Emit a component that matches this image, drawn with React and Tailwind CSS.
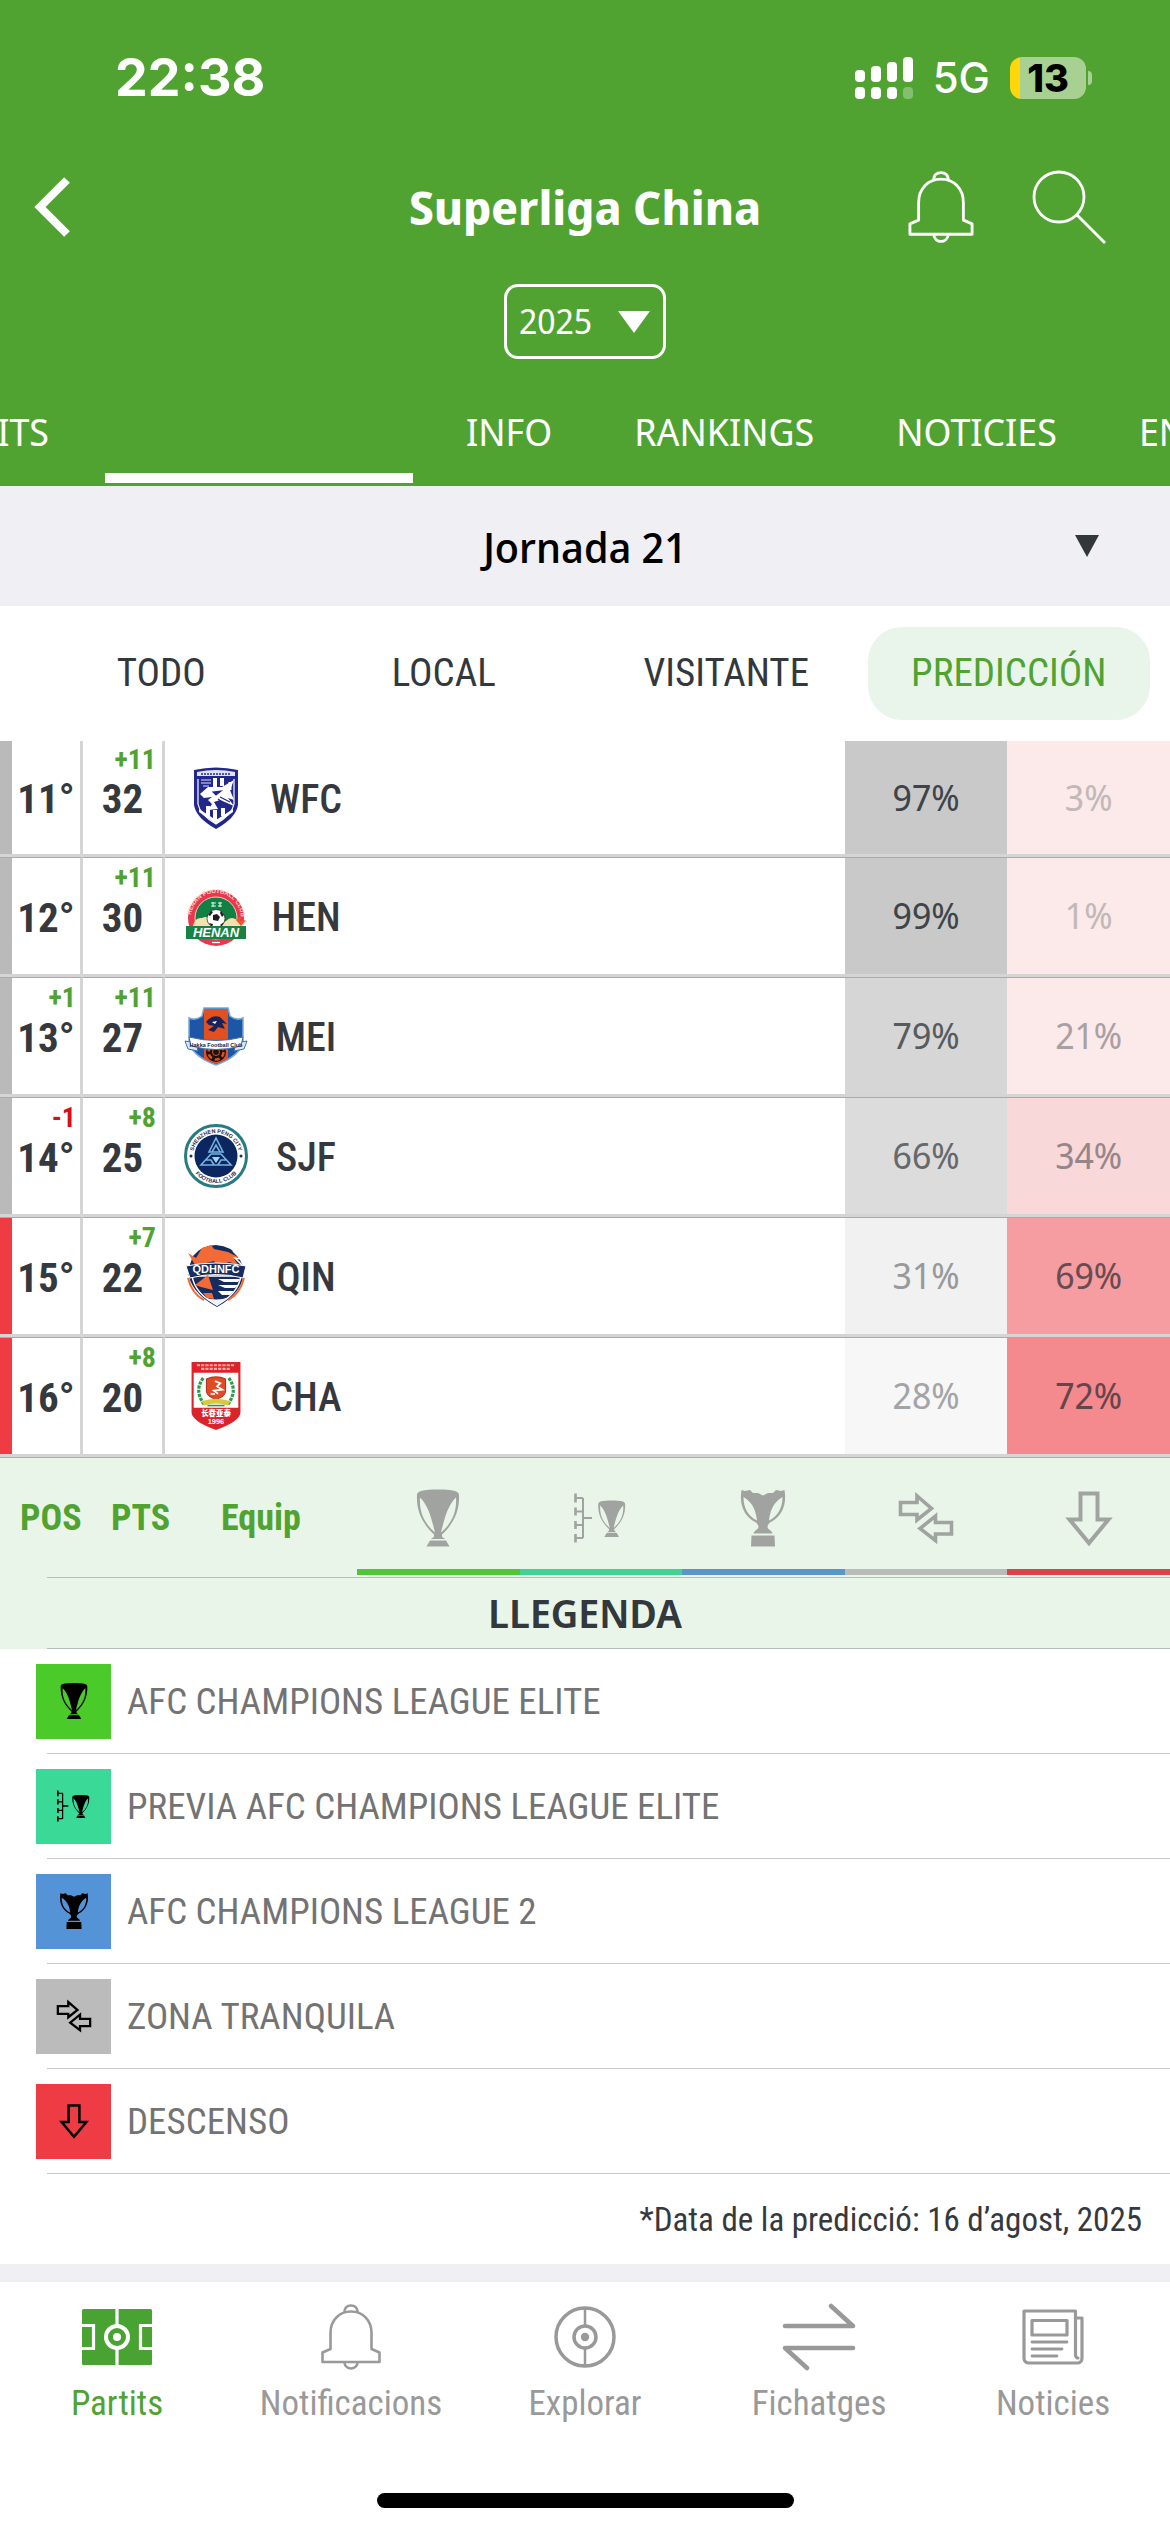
import React from "react";

const CONDENSED = "font-['Roboto_Condensed','Roboto',sans-serif]";
const WIDE = "font-['Noto_Sans_Display','Noto_Sans',sans-serif]";

/* ---------- icons ---------- */

const Bell = ({ className }) => (
  <svg className={className} viewBox="0 0 60 66" fill="none" stroke="currentColor" strokeWidth="2.6" strokeLinejoin="round" aria-hidden="true">
    <path d="M9.5 45V29C9.5 16 18.500 7.500 30 7.500S50.500 16 50.500 29V45L58.500 48.500V58H1.500V48.500Z" />
    <path d="M23.500 8.500C23 4 26 1.500 30 1.500S37 4 36.500 8.500" />
    <path d="M23.500 59C24 62.500 27 64.500 30 64.500S36 62.500 36.500 59" />
  </svg>
);

const CupShape = () => (
  <>
    <path
      fillRule="evenodd"
      d="M9 7C9 3 15 1.500 30 1.500S51 3 51 7C52 26 43 38 34 46.500V48.500C35 50 36.500 50 37 51H23C23.500 50 25 50 26 48.500V46.500C17 38 8 26 9 7ZM12 9.500C11 25 17 36 27 44.500C24 33 21 18 12 9.500ZM48 9.500C49 25 43 36 33 44.500C36 33 39 18 48 9.500Z"
    />
    <path d="M22 52.500H38L41.500 58.500H18.500Z" />
  </>
);

const Cup = ({ className }) => (
  <svg className={className} viewBox="0 0 60 60" fill="currentColor" aria-hidden="true">
    <CupShape />
  </svg>
);

const BracketCup = ({ className }) => (
  <svg className={className} viewBox="0 0 60 60" fill="currentColor" aria-hidden="true">
    <path d="M12 10V50M12 30H21M5 10H12M5 23.500H12M5 37H12M5 50H12" fill="none" stroke="currentColor" strokeWidth="2" />
    <path d="M4.500 5.500V14.500M4.500 19.500V27.500M4.500 33V41M4.500 46V54.500" fill="none" stroke="currentColor" strokeWidth="2.600" />
    <g transform="translate(21.500 11.500) scale(0.640)">
      <CupShape />
    </g>
  </svg>
);

const CrownCup = ({ className }) => (
  <svg className={className} viewBox="0 0 60 60" fill="currentColor" aria-hidden="true">
    <path
      fillRule="evenodd"
      d="M8.500 2L12 3L17 2L20 5L25 5L30 7.500L35 5L40 5L43 2L48 3L51.500 2C54 17 49 28 37 34.500C34.500 37 34 38.500 35 40.500C37 42.500 39.500 43.500 39.500 45.500H20.500C20.500 43.500 23 42.500 25 40.500C26 38.500 25.500 37 23 34.500C11 28 6 17 8.500 2ZM10.500 9C10.500 20 15 28 24 32.500C23 25 21 15 10.500 9ZM49.500 9C49.500 20 45 28 36 32.500C37 25 39 15 49.500 9Z"
    />
    <path d="M18.500 47.500H41.500L42 58.500H18Z" />
  </svg>
);

const CrossArrows = ({ className }) => (
  <svg className={className} viewBox="0 0 60 60" fill="none" stroke="currentColor" strokeWidth="3.600" aria-hidden="true">
    <path d="M4.500 14.500H21V8L35.500 20.500L21 32V26.500H4.500Z" />
    <path d="M55.500 34.500H39.500V28L24 40.500L39.500 52.500V46H55.500Z" />
  </svg>
);

const DownArrow = ({ className }) => (
  <svg className={className} viewBox="0 0 60 60" fill="none" stroke="currentColor" strokeWidth="4" aria-hidden="true">
    <path d="M21.500 5.500H38.500V31.500H49.500L30 55L10.500 31.500H21.500Z" />
  </svg>
);

const Pitch = () => (
  <svg className="h-14 w-[70px]" viewBox="0 0 70 56" aria-hidden="true">
    <rect width="70" height="56" rx="1.500" fill="#49a332" />
    <g fill="none" stroke="#fff" strokeWidth="3.200">
      <path d="M35 0V17M35 39V56M0 16.500H11.500V39.500H0M70 16.500H58.500V39.500H70" />
      <circle cx="35" cy="28" r="11" strokeWidth="4" />
    </g>
    <circle cx="35" cy="28" r="4" fill="#fff" />
  </svg>
);

const Explore = () => (
  <svg className="size-16" viewBox="0 0 64 64" fill="none" stroke="currentColor" strokeWidth="3.500" aria-hidden="true">
    <circle cx="32" cy="32" r="29" />
    <circle cx="32" cy="32" r="11" />
    <path d="M32 3V21M32 43V61" strokeWidth="2.500" />
    <circle cx="32" cy="32" r="4.200" fill="currentColor" stroke="none" />
  </svg>
);

const Transfer = () => (
  <svg className="h-[68px] w-[74px]" viewBox="0 0 74 68" fill="none" stroke="currentColor" strokeWidth="4.500" strokeLinecap="round" strokeLinejoin="round" aria-hidden="true">
    <path d="M3 23H71L49 3M71 45H3L25 65" />
  </svg>
);

const News = () => (
  <svg className="h-14 w-[62px]" viewBox="0 0 62 56" fill="none" stroke="currentColor" strokeWidth="3.200" strokeLinejoin="round" strokeLinecap="round" aria-hidden="true">
    <path d="M53.500 9H60V49C60 52 58 54 55.500 54H7C4 54 2 52 2 49V2H53.500V46C53.500 48 55 49 56 49" />
    <rect x="10" y="11.500" width="35" height="14.500" />
    <path d="M10 33H45M10 40H40M10 47H35" strokeWidth="2.800" />
  </svg>
);

const Caret = ({ className }) => (
  <svg className={className} viewBox="0 0 32 24" preserveAspectRatio="none" fill="currentColor" aria-hidden="true">
    <path d="M0 0H32L16 24Z" />
  </svg>
);

/* ---------- club crests ---------- */

const crestText = { fontFamily: "'Liberation Sans', sans-serif", fontWeight: 700 };

const WuhanCrest = () => (
  <svg className="size-16" viewBox="0 0 64 64" role="img" aria-label="WFC">
    <path d="M10 4Q32-1 54 4V39Q52 52 32 63Q12 52 10 39Z" fill="#22278b" />
    <path d="M13 6Q32 2 51 6V10H13Z" fill="#dfe2f4" />
    <path d="M17 8H47" stroke="#22278b" strokeWidth="1.500" strokeDasharray="2 1" />
    <path d="M14 13V38Q16 49 32 58Q48 49 50 38V13" fill="none" stroke="#fff" strokeWidth="1.200" />
    <g stroke="#fff" strokeWidth="4">
      <path d="M31 12V22M38 12V20M31 44V54M24 40V50M39 42V50" />
      <path d="M46 16V24" strokeWidth="3" />
    </g>
    <path d="M17 14H27M17 17H27M19 20H25" stroke="#9fa5d8" strokeWidth="1.500" />
    <path d="M16 28L24 21L38 21L50 14L46 24L50 34L44 32L50 40L36 34L30 36L34 43L24 44L28 38L24 34L28 31L20 32Z" fill="#fff" />
    <path d="M29 26L37 25L32 29ZM36 31L46 36M34 33L44 40" fill="#22278b" stroke="#22278b" strokeWidth="1.200" />
    <path d="M15 43L32 54L49 43V46L32 58L15 46Z" fill="#fff" />
  </svg>
);

const HenanCrest = () => (
  <svg className="size-16" viewBox="0 0 64 64" role="img" aria-label="HEN">
    <defs>
      <path id="henan-arc" d="M7 34A25 25 0 0 1 57 34" />
    </defs>
    <circle cx="32" cy="34" r="28" fill="#e8384d" />
    <circle cx="32" cy="34" r="21" fill="#118043" stroke="#f6c9bd" strokeWidth="1" />
    <text fontSize="6" fill="#fbd7d0" style={crestText}>
      <textPath href="#henan-arc" startOffset="3">HENAN FOOTBALL CLUB</textPath>
    </text>
    <path d="M27 19H32M27 22H32M29 18V23M34 19H38M34 22H38M36 18V23" stroke="#d9efdf" strokeWidth="1.200" />
    <path d="M9 42Q11 33 18 34Q24 31 28 37Q34 42 42 37Q48 31 54 37L63 37L58 43Z" fill="#f8dfb0" />
    <path d="M52 36L57 32L56 37L62 36L57 42Z" fill="#ee5336" />
    <circle cx="32" cy="34.500" r="9" fill="#fff" stroke="#222" strokeWidth=".7" />
    <path d="M29 31L33 30L36 33L34 37L29 36ZM24 31L27 27L29 28L26 32ZM37 27L40 31L38 33L36 29ZM25 39L29 40L28 43ZM36 41L40 38L38 42Z" fill="#1c1c1c" />
    <path d="M2 42H62V55H2Z" fill="#168344" />
    <text x="32" y="52.500" fontSize="13" fontStyle="italic" textAnchor="middle" fill="#fff" style={crestText}>HENAN</text>
    <path d="M28 58.500H36" stroke="#fff" strokeWidth="1.300" />
  </svg>
);

const MeizhouCrest = () => (
  <svg className="size-16" viewBox="0 0 64 64" role="img" aria-label="MEI">
    <path d="M20 4H44L46 12Q52 17 59 14V38Q56 52 32 61Q8 52 5 38V14Q12 17 18 12Z" fill="#1d56a5" stroke="#7aa9d6" strokeWidth="1.500" />
    <path d="M20 5H44V55L32 60L20 55Z" fill="#e2501f" />
    <path d="M22 18Q28 10 36 13L43 20L38 19L41 25L34 23L30 28L24 26L30 22L25 21Z" fill="#1a2358" />
    <path d="M28 18L33 17L31 20Z" fill="#fff" />
    <circle cx="32" cy="48" r="10" fill="#1b1210" />
    <circle cx="32" cy="48" r="7.500" fill="none" stroke="#e2501f" strokeWidth="2.500" strokeDasharray="5 3" />
    <circle cx="32" cy="48" r="3.500" fill="#1b1210" stroke="#e2501f" strokeWidth="1" />
    <path d="M1 37L12 39L14 47L4 45ZM63 37L52 39L50 47L60 45Z" fill="#dbe9f5" stroke="#3d6fa9" strokeWidth="1" />
    <path d="M5 33Q32 40 59 33L57 42Q32 49 7 42Z" fill="#fff" stroke="#3d6fa9" strokeWidth="1" />
    <text x="32" y="43" fontSize="5.500" textAnchor="middle" fill="#23233d" style={crestText}>Hakka Football Club</text>
  </svg>
);

const ShenzhenCrest = () => (
  <svg className="size-16" viewBox="0 0 64 64" role="img" aria-label="SJF">
    <defs>
      <path id="sz-top" d="M9 32A23 23 0 0 1 55 32" />
      <path id="sz-bottom" d="M5 32A27 27 0 0 0 59 32" />
    </defs>
    <circle cx="32" cy="32" r="30.500" fill="#fff" stroke="#277c82" strokeWidth="3" />
    <circle cx="32" cy="32" r="21.500" fill="#0c265f" />
    <text fontSize="5.500" fill="#1f2b52" style={crestText}>
      <textPath href="#sz-top" startOffset="50%" textAnchor="middle">SHENZHEN PENG CITY</textPath>
    </text>
    <text fontSize="5.500" fill="#1f2b52" style={crestText}>
      <textPath href="#sz-bottom" startOffset="50%" textAnchor="middle">FOOTBALL CLUB</textPath>
    </text>
    <circle cx="7" cy="32" r="1.500" fill="#1f2b52" />
    <circle cx="57" cy="32" r="1.500" fill="#1f2b52" />
    <g fill="none" stroke="#74b3e3" strokeWidth="1.600">
      <path d="M32 14L25 28H39ZM27 30L17 41H47L37 30M22 36H27L30 41M42 36H37L34 41" />
      <path d="M28 28L32 21L36 28M27 30H37" />
    </g>
    <path d="M28 33H36L32 39Z" fill="#a5d2f3" />
  </svg>
);

const QingdaoCrest = () => (
  <svg className="size-16" viewBox="0 0 64 64" role="img" aria-label="QIN">
    <path d="M32 1Q48 2 55 14L60 24Q61 48 33 63Q5 48 4 26L9 12Q18 1 32 1Z" fill="#172c5e" />
    <path d="M4 34Q8 50 20 56M60 34Q56 50 44 56" fill="none" stroke="#f26a35" strokeWidth="2" />
    <path d="M8 32H57Q54 50 33 61Q11 50 8 32Z" fill="#172c5e" stroke="#fff" strokeWidth="1.500" />
    <path d="M4 9L12 14L18 4L27 1L30 5L44 8L54 13L50 15L56 23L46 18L38 20L36 26L30 17L18 20L14 26Z" fill="#f26a35" />
    <path d="M49 7L57 15L51 14L58 21" fill="none" stroke="#fff" strokeWidth="1.500" />
    <path d="M2 22Q32 16 62 22L59 34Q32 27 6 34Z" fill="#172c5e" stroke="#fff" strokeWidth="1" />
    <text x="32" y="29" fontSize="11" textAnchor="middle" fill="#fff" style={crestText}>QDHNFC</text>
    <path d="M11 41L24 31L29 46L17 43ZM19 49L28 49L30 55L23 54Z" fill="#f26a35" />
    <path d="M34 35H56L54 38H40ZM34 41H54L51 44H41ZM34 47H50L46 51H38Z" fill="#fff" />
    <path d="M20 53Q32 58 45 53L33 62Z" fill="#f0f2f6" />
  </svg>
);

const ChangchunCrest = () => (
  <svg className="size-[68px]" viewBox="0 0 64 64" role="img" aria-label="CHA">
    <path d="M9 0H55V48Q54 56 32 64Q10 56 9 48Z" fill="#da242a" />
    <path d="M14 3H50M18 6.500H46" stroke="#f4a9a5" strokeWidth="2" strokeDasharray="3 1" />
    <path d="M11 10H53V43H11Z" fill="#fff" />
    <path d="M20 15Q11 27 21 40M44 15Q53 27 43 40" fill="none" stroke="#2b9a4b" strokeWidth="3" strokeDasharray="3 1" />
    <path d="M23 16Q32 12 41 16V28Q40 33 32 35Q24 33 23 28Z" fill="#e04a24" stroke="#b3341d" strokeWidth="1" />
    <path d="M31 18L36 20L33 23L38 26L30 27L34 30M27 30H31" fill="none" stroke="#fff" strokeWidth="1.700" />
    <path d="M18 37Q32 32 46 37L43 41Q32 37 21 41Z" fill="#d9c93a" />
    <path d="M24 41H40" stroke="#2b9a4b" strokeWidth="1.500" />
    <text x="32" y="51" fontSize="7" textAnchor="middle" fill="#fff" style={{ fontFamily: "'Noto Sans CJK SC', sans-serif", fontWeight: 900 }}>长春亚泰</text>
    <text x="32" y="58" fontSize="7" textAnchor="middle" fill="#fff" style={crestText}>1996</text>
  </svg>
);

/* ---------- data ---------- */

const rows = [
  { pos: "11°", pts: "32", dPts: "+11", Crest: WuhanCrest, name: "WFC", strip: "bg-[#bababa]", a: ["97%", "bg-[#c9c9c9] text-[#3f4448]"], b: ["3%", "bg-[#fceaea] text-[#c3b8b9]"] },
  { pos: "12°", pts: "30", dPts: "+11", Crest: HenanCrest, name: "HEN", strip: "bg-[#bababa]", a: ["99%", "bg-[#c9c9c9] text-[#3f4448]"], b: ["1%", "bg-[#fceaea] text-[#c3b8b9]"] },
  { pos: "13°", dPos: "+1", pts: "27", dPts: "+11", Crest: MeizhouCrest, name: "MEI", strip: "bg-[#bababa]", a: ["79%", "bg-[#d6d6d6] text-[#575b5e]"], b: ["21%", "bg-[#fceaea] text-[#a9a0a3]"] },
  { pos: "14°", dPos: "-1", pts: "25", dPts: "+8", Crest: ShenzhenCrest, name: "SJF", strip: "bg-[#bababa]", a: ["66%", "bg-[#dcdcdc] text-[#66696c]"], b: ["34%", "bg-[#f9d8da] text-[#968689]"] },
  { pos: "15°", pts: "22", dPts: "+7", Crest: QingdaoCrest, name: "QIN", strip: "bg-[#ee3b44]", a: ["31%", "bg-[#f1f1f1] text-[#97999a]"], b: ["69%", "bg-[#f69da1] text-[#694c51]"] },
  { pos: "16°", pts: "20", dPts: "+8", Crest: ChangchunCrest, name: "CHA", strip: "bg-[#ee3b44]", a: ["28%", "bg-[#f7f7f7] text-[#a3a4a5]"], b: ["72%", "bg-[#f4898e] text-[#64454a]"] },
];

const zones = [
  { label: "AFC CHAMPIONS LEAGUE ELITE", Icon: Cup, bar: "bg-[#4ec636]", box: "bg-[#4acb29]" },
  { label: "PREVIA AFC CHAMPIONS LEAGUE ELITE", Icon: BracketCup, bar: "bg-[#41d394]", box: "bg-[#3ad997]" },
  { label: "AFC CHAMPIONS LEAGUE 2", Icon: CrownCup, bar: "bg-[#5896cc]", box: "bg-[#5593d7]" },
  { label: "ZONA TRANQUILA", Icon: CrossArrows, bar: "bg-[#b9bcb7]", box: "bg-[#bbbbbb]" },
  { label: "DESCENSO", Icon: DownArrow, bar: "bg-[#dd414a]", box: "bg-[#ee3b44]" },
];

const filters = ["TODO", "LOCAL", "VISITANTE", "PREDICCIÓN"];

const navItems = [
  { label: "Partits", icon: <Pitch />, active: true },
  { label: "Notificacions", icon: <Bell className="h-[66px] w-[60px]" /> },
  { label: "Explorar", icon: <Explore /> },
  { label: "Fichatges", icon: <Transfer /> },
  { label: "Noticies", icon: <News /> },
];

const signal = ["h-3", "h-4", "h-5", "h-[25px]"];

/* ---------- sections ---------- */

function StatusBar() {
  return (
    <div className="flex h-[156px] items-center justify-between pr-[78px] pl-[115px] font-['Inter',sans-serif] leading-none">
      <span className="text-[52px] font-bold">22:38</span>
      <div className="flex items-center gap-5">
        <div className="flex h-[42px] items-end gap-1.5">
          {signal.map((h, i) => (
            <div key={h} className="flex flex-col gap-[5px]">
              <span className={`w-2.5 rounded-[4px] bg-white ${h}`} />
              <span className={`h-3 w-2.5 rounded-[4px] ${i === 3 ? "bg-white/30" : "bg-white"}`} />
            </div>
          ))}
        </div>
        <span className="text-[42px] font-medium">5G</span>
        <div className="flex items-center gap-0.5">
          <div className="flex h-[42px] w-[76px] items-center justify-center rounded-xl bg-[linear-gradient(90deg,#ffd60a_10px,#a8d191_10px)] text-[38px] font-extrabold text-black">13</div>
          <span className="h-3.5 w-1 rounded-r-full bg-white/50" />
        </div>
      </div>
    </div>
  );
}

function Header() {
  return (
    <header className="bg-[#50a331] text-white">
      <StatusBar />
      <div className="grid h-[102px] grid-cols-[1fr_auto_1fr] items-center px-8">
        <button aria-label="Enrere" className="justify-self-start">
          <svg className="h-[60px] w-10" viewBox="0 0 40 60" fill="none" stroke="currentColor" strokeWidth="8" aria-hidden="true">
            <path d="M35 3L8 30L35 57" />
          </svg>
        </button>
        <h1 className={`${WIDE} text-[47px] leading-none font-bold`}>Superliga China</h1>
        <div className="flex items-center gap-[58px] justify-self-end pr-8">
          <button aria-label="Notificacions">
            <Bell className="h-[72px] w-[66px]" />
          </button>
          <button aria-label="Cercar">
            <svg className="size-[74px]" viewBox="0 0 74 74" fill="none" stroke="currentColor" strokeWidth="2.800" aria-hidden="true">
              <circle cx="27" cy="27" r="25" />
              <path d="M45 45L73 73" />
            </svg>
          </button>
        </div>
      </div>
      <div className="flex justify-center pt-[26px]">
        <div className="relative">
          <select aria-label="Temporada" className={`${WIDE} h-[75px] w-[162px] appearance-none rounded-[14px] border-[3px] border-white pl-3 text-[34px] leading-normal`}>
            <option>2025</option>
          </select>
          <Caret className="pointer-events-none absolute top-[27px] right-4 h-[22px] w-8" />
        </div>
      </div>
      <nav aria-label="Seccions" className={`${WIDE} flex h-[127px] overflow-hidden text-[38px] leading-none whitespace-nowrap`}>
        <a href="#partits" className="flex w-[89px] shrink-0 items-center justify-end pt-4 pr-10">ITS</a>
        <a href="#classificacio" aria-label="Classificació" aria-current="page" className="mr-3 ml-4 flex w-[308px] shrink-0 items-end pb-[3px]">
          <span className="h-2.5 w-full bg-white" />
        </a>
        {["INFO", "RANKINGS", "NOTICIES", "EN"].map((t) => (
          <a key={t} href={`#${t.toLowerCase()}`} className="flex shrink-0 items-center px-[41px] pt-4">
            {t}
          </a>
        ))}
      </nav>
    </header>
  );
}

function Matchday() {
  return (
    <div className="relative bg-[#efeff4]">
      <select aria-label="Jornada" className={`${WIDE} h-[120px] w-full appearance-none text-center text-[42px] leading-normal font-medium text-black [text-align-last:center]`}>
        <option>Jornada 21</option>
      </select>
      <Caret className="pointer-events-none absolute top-[49px] right-[71px] h-[22px] w-6 text-[#33373b]" />
    </div>
  );
}

function Filters() {
  return (
    <div className={`${CONDENSED} grid grid-cols-4 px-5 py-[21px] text-[39px] leading-none text-[#33383c]`}>
      {filters.map((f) => (
        <button key={f} aria-pressed={f === "PREDICCIÓN"} className={f === "PREDICCIÓN" ? "h-[93px] rounded-[34px] bg-[#e9f5ea] text-[#50a331]" : "h-[93px]"}>
          {f}
        </button>
      ))}
    </div>
  );
}

const line = "border-b-[3px] border-b-[#d5d5d5] border-t border-t-[#a9abab] group-first:border-t-0";

function Standings() {
  return (
    <table className={`${CONDENSED} w-full table-fixed border-separate border-spacing-0 text-[#35393d]`}>
      <colgroup>
        <col className="w-3" />
        <col className="w-[71px]" />
        <col className="w-[82px]" />
        <col className="w-[192px]" />
        <col />
        <col />
        <col />
        <col />
        <col />
      </colgroup>
      <tbody>
        {rows.map(({ pos, dPos, pts, dPts, Crest, name, strip, a, b }) => (
          <tr key={name} className="group h-[120px] text-center leading-none first:h-[116px]">
            <td className={`${line} ${strip} p-0`} />
            <td className={`${line} border-r-[3px] border-r-[#d5d5d5] p-0`}>
              <div className="relative flex h-28 items-center justify-center pt-1 text-[41px] font-bold">
                {dPos && <span className={`absolute top-1 right-1 text-[28px] ${dPos === "-1" ? "text-[#dc0c16]" : "text-[#50a331]"}`}>{dPos}</span>}
                {pos}
              </div>
            </td>
            <td className={`${line} border-r-[3px] border-r-[#d5d5d5] p-0`}>
              <div className="relative flex h-28 items-center justify-center pt-1 text-[41px] font-bold">
                <span className="absolute top-1 right-1.5 text-[28px] text-[#50a331]">{dPts}</span>
                {pts}
              </div>
            </td>
            <td colSpan={4} className={`${line} p-0`}>
              <div className="flex items-center pl-4">
                <div className="flex w-[70px] justify-center">
                  <Crest />
                </div>
                <span className="ml-4 w-[78px] pt-1 text-[40px] font-medium">{name}</span>
              </div>
            </td>
            <td className={`${line} ${WIDE} p-0 text-[36px] ${a[1]}`}>{a[0]}</td>
            <td className={`${line} ${WIDE} p-0 text-[36px] ${b[1]}`}>{b[0]}</td>
          </tr>
        ))}
      </tbody>
      <tfoot>
        <tr className="h-[120px] bg-[#eaf5ea] text-left text-[36px] leading-none font-bold text-[#50a331]">
          <th scope="col" colSpan={2} className="border-t border-[#a3b5a5] py-0 pr-0 pl-5">POS</th>
          <th scope="col" className="border-t border-[#a3b5a5] p-0 pl-7">PTS</th>
          <th scope="col" className="border-t border-[#a3b5a5] p-0 pl-14">Equip</th>
          {zones.map(({ label, Icon, bar }) => (
            <th key={label} scope="col" aria-label={label} className="border-t border-[#a3b5a5] p-0">
              <div className="flex h-[119px] flex-col items-center justify-between pt-[30px] pb-0.5 text-[#a1a3a1]">
                <Icon className="size-[60px]" />
                <span className={`h-1.5 w-full ${bar}`} />
              </div>
            </th>
          ))}
        </tr>
      </tfoot>
    </table>
  );
}

function Legend() {
  return (
    <section>
      <h2 className={`${WIDE} border-y bg-[#eaf5ea] pt-[15px] pb-[15px] text-center text-[40px] leading-10 font-semibold text-[#32383c] [border-image:linear-gradient(90deg,transparent_48px,#b9c0ba_48px)_1]`}>
        LLEGENDA
      </h2>
      <ul className={`${CONDENSED} text-[37px] leading-none text-[#737373]`}>
        {zones.map(({ label, Icon, box }) => (
          <li key={label} className="flex h-[105px] items-center gap-4 border-b pl-9 [border-image:linear-gradient(90deg,transparent_48px,#c6c9cb_48px)_1]">
            <span className={`flex size-[75px] shrink-0 items-center justify-center text-black ${box}`}>
              <Icon className="size-[38px]" />
            </span>
            {label}
          </li>
        ))}
      </ul>
      <p className={`${CONDENSED} flex h-[90px] items-center justify-end pr-7 text-[33px] leading-none text-[#35393d]`}>*Data de la predicció: 16 d’agost, 2025</p>
    </section>
  );
}

function BottomNav() {
  return (
    <nav aria-label="Principal" className={`${CONDENSED} grid grid-cols-5 pt-4 text-center text-[35px] leading-10 text-[#999999]`}>
      {navItems.map(({ label, icon, active }) => (
        <a key={label} href={`#nav-${label.toLowerCase()}`} className={active ? "text-[#50a331]" : ""}>
          <span className="flex h-[78px] items-center justify-center">{icon}</span>
          <span className="mt-2 block">{label}</span>
        </a>
      ))}
    </nav>
  );
}

export default function App() {
  return (
    <div className="min-h-screen overflow-x-hidden bg-white">
      <Header />
      <main>
        <Matchday />
        <Filters />
        <Standings />
        <Legend />
      </main>
      <div className="h-[18px] bg-[#efeff4]" />
      <BottomNav />
      <div className="mx-auto mt-[69px] mb-5 h-[15px] w-[417px] rounded-full bg-black" />
    </div>
  );
}
